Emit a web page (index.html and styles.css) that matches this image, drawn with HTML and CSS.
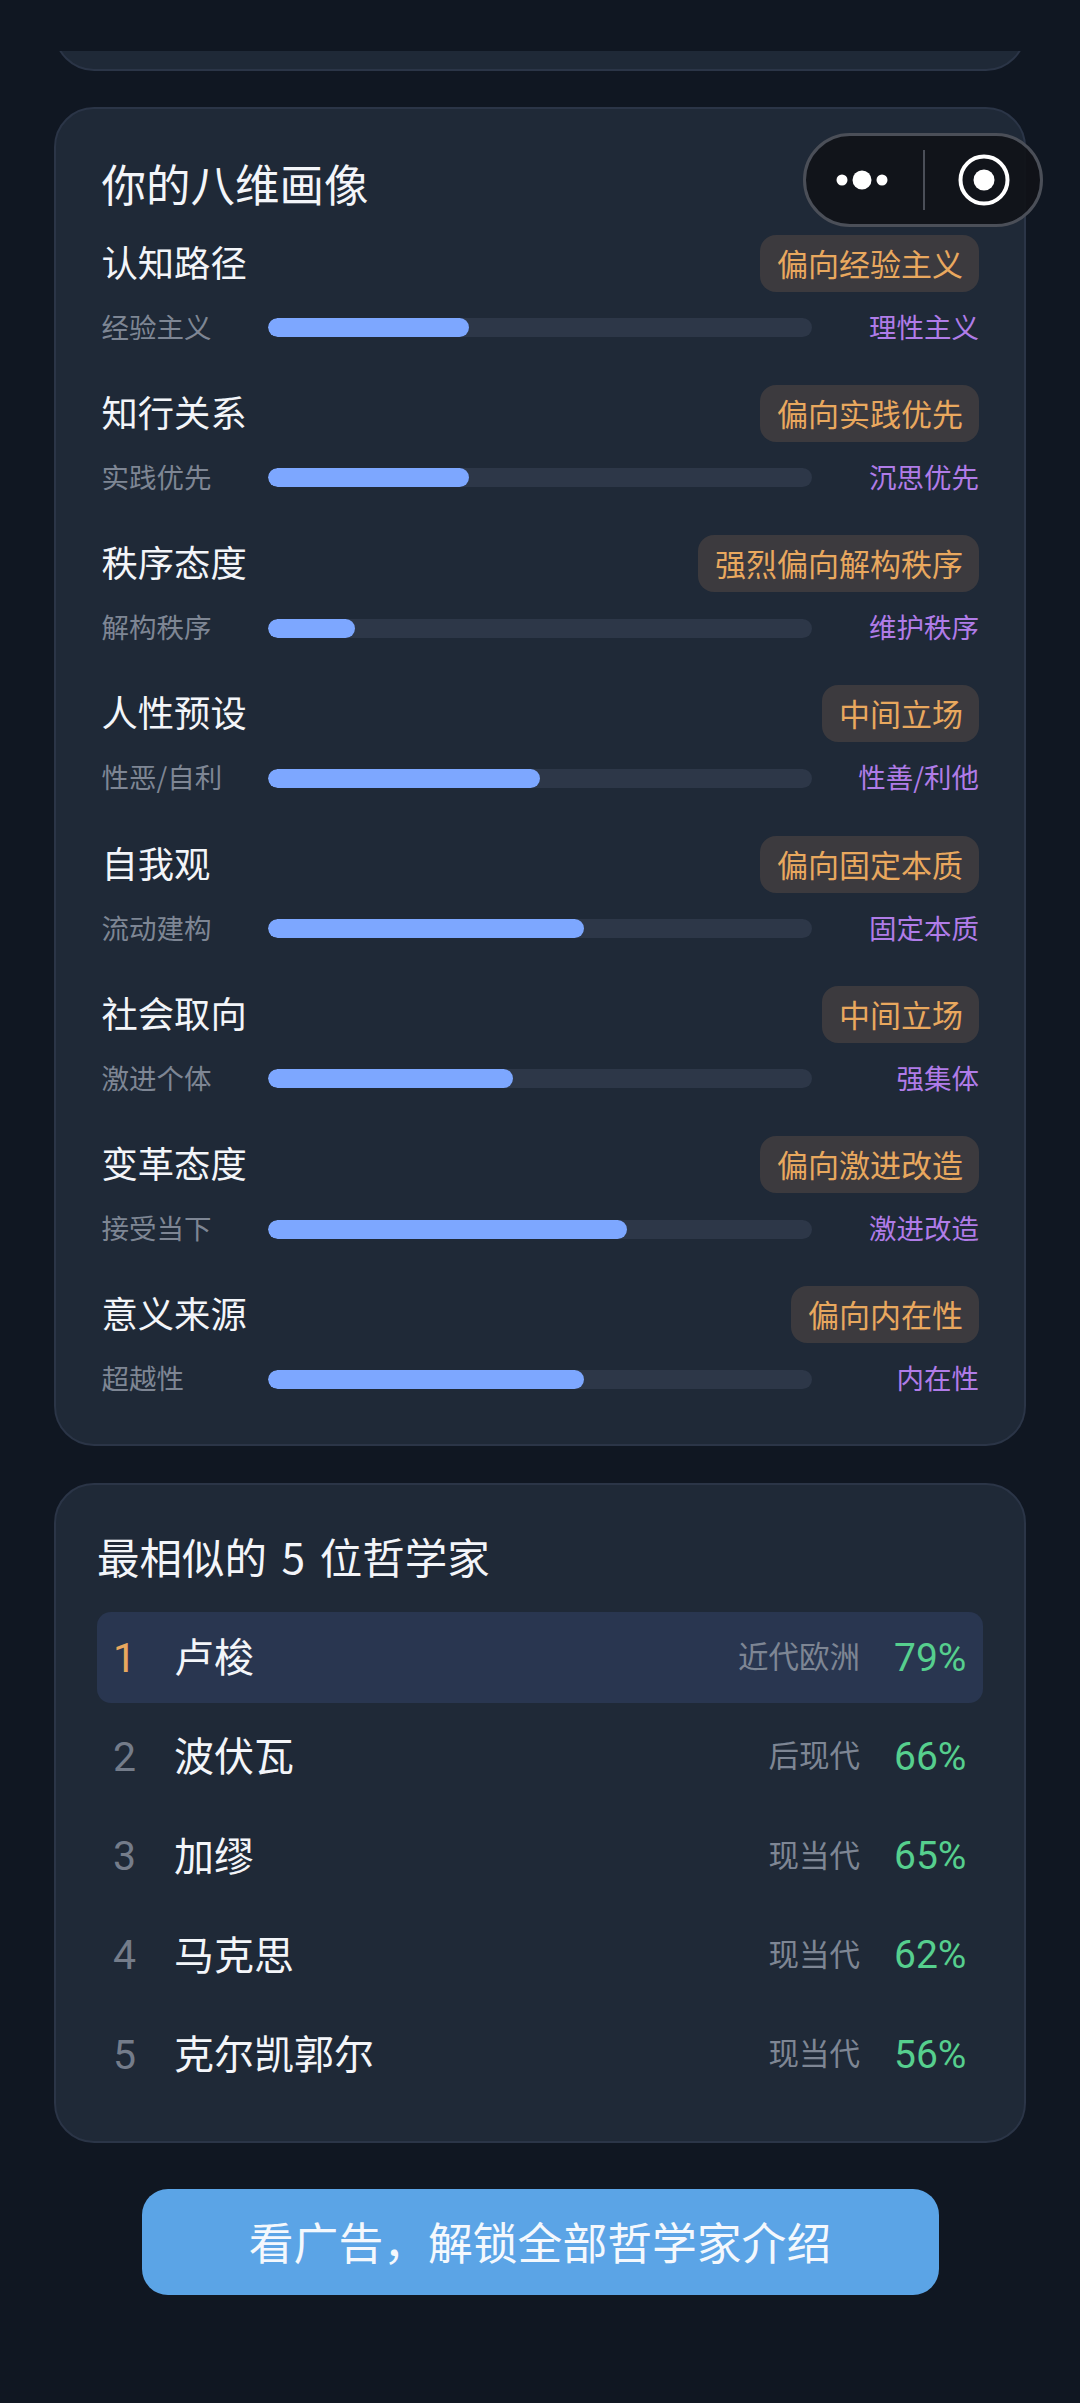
FILE: index.html
```html
<!DOCTYPE html>
<html lang="zh-CN">
<head>
    <meta charset="UTF-8">
    <meta name="viewport" content="width=device-width, initial-scale=1.0">
    <title>哲学家测试结果</title>
    <link rel="stylesheet" href="styles.css">
</head>
<body>

<!-- 小程序胶囊按钮 -->
<div class="capsule">
    <svg class="capsule-more" width="64" height="22" viewBox="0 0 64 22">
        <circle cx="11" cy="11" r="5.5" fill="#fff"/>
        <circle cx="31" cy="11" r="9.5" fill="#fff"/>
        <circle cx="51" cy="11" r="5.5" fill="#fff"/>
    </svg>
    <span class="capsule-line"></span>
    <svg class="capsule-close" width="52" height="52" viewBox="0 0 52 52">
        <circle cx="26" cy="26" r="23.5" fill="none" stroke="#fff" stroke-width="4"/>
        <circle cx="26" cy="26" r="10.5" fill="#fff"/>
    </svg>
</div>

<div class="page">
    <div class="card-end"><div class="card card-end-inner"></div></div>

    <!-- 八维画像 -->
    <section class="card card-dims">
        <h2 class="card-title">你的八维画像</h2>

        <div class="dim">
            <div class="dim-head"><span class="dim-name">认知路径</span><span class="dim-tag">偏向经验主义</span></div>
            <div class="dim-bar">
                <span class="dim-left">经验主义</span>
                <div class="track"><div class="fill" style="width: 37%"></div></div>
                <span class="dim-right">理性主义</span>
            </div>
        </div>

        <div class="dim">
            <div class="dim-head"><span class="dim-name">知行关系</span><span class="dim-tag">偏向实践优先</span></div>
            <div class="dim-bar">
                <span class="dim-left">实践优先</span>
                <div class="track"><div class="fill" style="width: 37%"></div></div>
                <span class="dim-right">沉思优先</span>
            </div>
        </div>

        <div class="dim">
            <div class="dim-head"><span class="dim-name">秩序态度</span><span class="dim-tag">强烈偏向解构秩序</span></div>
            <div class="dim-bar">
                <span class="dim-left">解构秩序</span>
                <div class="track"><div class="fill" style="width: 16%"></div></div>
                <span class="dim-right">维护秩序</span>
            </div>
        </div>

        <div class="dim">
            <div class="dim-head"><span class="dim-name">人性预设</span><span class="dim-tag">中间立场</span></div>
            <div class="dim-bar">
                <span class="dim-left">性恶/自利</span>
                <div class="track"><div class="fill" style="width: 50%"></div></div>
                <span class="dim-right">性善/利他</span>
            </div>
        </div>

        <div class="dim">
            <div class="dim-head"><span class="dim-name">自我观</span><span class="dim-tag">偏向固定本质</span></div>
            <div class="dim-bar">
                <span class="dim-left">流动建构</span>
                <div class="track"><div class="fill" style="width: 58%"></div></div>
                <span class="dim-right">固定本质</span>
            </div>
        </div>

        <div class="dim">
            <div class="dim-head"><span class="dim-name">社会取向</span><span class="dim-tag">中间立场</span></div>
            <div class="dim-bar">
                <span class="dim-left">激进个体</span>
                <div class="track"><div class="fill" style="width: 45%"></div></div>
                <span class="dim-right">强集体</span>
            </div>
        </div>

        <div class="dim">
            <div class="dim-head"><span class="dim-name">变革态度</span><span class="dim-tag">偏向激进改造</span></div>
            <div class="dim-bar">
                <span class="dim-left">接受当下</span>
                <div class="track"><div class="fill" style="width: 66%"></div></div>
                <span class="dim-right">激进改造</span>
            </div>
        </div>

        <div class="dim">
            <div class="dim-head"><span class="dim-name">意义来源</span><span class="dim-tag">偏向内在性</span></div>
            <div class="dim-bar">
                <span class="dim-left">超越性</span>
                <div class="track"><div class="fill" style="width: 58%"></div></div>
                <span class="dim-right">内在性</span>
            </div>
        </div>
    </section>

    <!-- 最相似的哲学家 -->
    <section class="card card-top">
        <h2 class="card-title">最相似的 5 位哲学家</h2>
        <div class="rank-list">
            <div class="rank-row first">
                <span class="rank-no">1</span><span class="rank-name">卢梭</span>
                <span class="rank-era">近代欧洲</span><span class="rank-pct">79%</span>
            </div>
            <div class="rank-row">
                <span class="rank-no">2</span><span class="rank-name">波伏瓦</span>
                <span class="rank-era">后现代</span><span class="rank-pct">66%</span>
            </div>
            <div class="rank-row">
                <span class="rank-no">3</span><span class="rank-name">加缪</span>
                <span class="rank-era">现当代</span><span class="rank-pct">65%</span>
            </div>
            <div class="rank-row">
                <span class="rank-no">4</span><span class="rank-name">马克思</span>
                <span class="rank-era">现当代</span><span class="rank-pct">62%</span>
            </div>
            <div class="rank-row">
                <span class="rank-no">5</span><span class="rank-name">克尔凯郭尔</span>
                <span class="rank-era">现当代</span><span class="rank-pct">56%</span>
            </div>
        </div>
    </section>

    <button class="unlock-btn">看广告，解锁全部哲学家介绍</button>
</div>

</body>
</html>
```

FILE: styles.css
```css
/* 基础 */
* {
    box-sizing: border-box;
}

body {
    margin: 0;
    height: 2403px;
    overflow: hidden;
    background-color: #101722;
    font-family: "Noto Sans CJK SC", "Noto Sans", sans-serif;
    color: #f3f5f9;
}

.page {
    display: flex;
    flex-direction: column;
    padding: 51px 54px 0;
}

/* 胶囊按钮 */
.capsule {
    position: absolute;
    top: 133px;
    left: 803px;
    width: 240px;
    height: 94px;
    display: flex;
    align-items: center;
    border: 3px solid #4b4f58;
    border-radius: 47px;
    background-color: rgba(16, 18, 24, 0.92);
}

.capsule-more {
    margin-left: 25px;
}

.capsule-line {
    width: 2px;
    height: 60px;
    margin-left: 28px;
    background-color: #4b4f58;
}

.capsule-close {
    margin-left: 33px;
}

/* 卡片 */
.card {
    background-color: #1f2937;
    border: 2px solid #2b3547;
    border-radius: 40px;
}

/* 上一张卡片露出的底边 */
.card-end {
    height: 20px;
    overflow: hidden;
}

.card-end-inner {
    height: 80px;
    margin-top: -60px;
}

.card-dims {
    height: 1339px;
    margin-top: 36px;
    padding: 44px 45px 0 45.5px;
}

.card-top {
    margin-top: 37px;
    padding: 41px;
}

.card-title {
    margin: 0;
    font-size: 44.5px;
    font-weight: 400;
    line-height: 60px;
    padding-bottom: 2px;
}

/* 八维 */
.dim {
    margin-bottom: 39.25px;
}

.dim:last-child {
    margin-bottom: 0;
}

.card-dims .card-title {
    margin-bottom: 19.5px;
}

.dim-head {
    display: flex;
    justify-content: space-between;
    align-items: center;
    height: 57px;
}

.dim-name {
    padding-bottom: 5px;
    font-size: 36.3px;
}

.dim-tag {
    height: 57px;
    line-height: 55px;
    padding: 0 16px 0 17px;
    font-size: 31px;
    color: #e9a85e;
    background-color: #3c3a3e;
    border-radius: 16px;
}

.dim-bar {
    display: grid;
    grid-template-columns: 166.5px 1fr 167px;
    grid-template-rows: 36px;
    align-items: center;
    height: 36px;
    margin-top: 18px;
    font-size: 27.5px;
    line-height: 36px;
}

.dim-left {
    padding-bottom: 4px;
    color: #7e8694;
}

.dim-right {
    padding-bottom: 4px;
    color: #b07ce8;
    text-align: right;
}

.track {
    height: 19px;
    background-color: #2d3748;
    border-radius: 10px;
    overflow: hidden;
}

.fill {
    height: 100%;
    background-color: #7da7ff;
    border-radius: 10px;
}

/* 排名 */
.card-top .card-title {
    margin-bottom: 24px;
    font-size: 42.5px;
    word-spacing: 5px;
}

.rank-list {
    display: flex;
    flex-direction: column;
    gap: 8.25px;
}

.rank-row {
    display: flex;
    align-items: center;
    height: 91px;
    padding: 0 17px 0 16px;
    border-radius: 14px;
}

.rank-row.first {
    background-color: #293650;
}

.rank-no {
    width: 61px;
    font-family: Roboto, sans-serif;
    font-size: 41px;
    color: #747c8a;
}

.first .rank-no {
    color: #e9a85e;
}

.rank-name {
    flex: 1;
    padding-bottom: 5px;
    font-size: 40px;
}

.rank-era {
    padding-bottom: 5px;
    font-size: 30.5px;
    color: #7e8694;
}

.rank-pct {
    width: 72px;
    margin-left: 34px;
    font-family: Roboto, sans-serif;
    font-size: 39px;
    color: #56cf8e;
    white-space: nowrap;
}

/* 按钮 */
.unlock-btn {
    align-self: center;
    width: 797px;
    height: 106px;
    margin-top: 46px;
    padding: 0 0 3px;
    border: none;
    border-radius: 26px;
    background-color: #5ba4e6;
    color: #f4f8fd;
    font-family: inherit;
    font-size: 44.8px;
}
```
